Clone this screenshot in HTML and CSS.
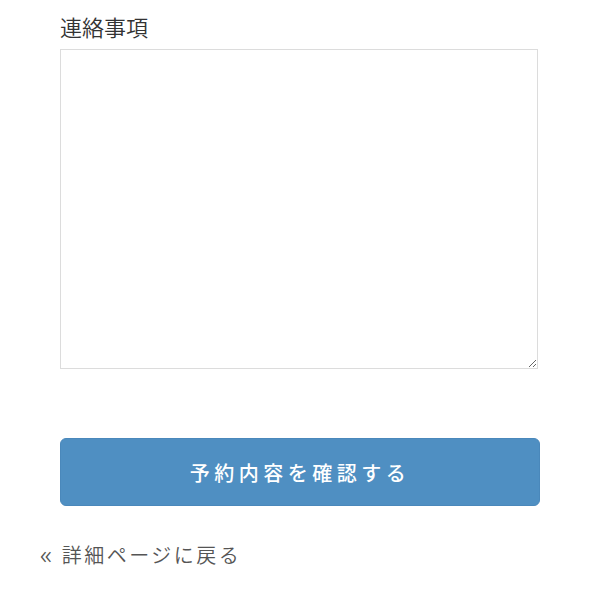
FILE: index.html
```html
<!DOCTYPE html>
<html lang="ja">
<head>
<meta charset="utf-8">
<link rel="stylesheet" href="styles.css">
</head>
<body>
<div class="page">
  <div class="form">
    <label class="label" for="note">連絡事項</label>
    <textarea id="note" class="note"></textarea>
    <button class="submit" type="button">予約内容を確認する</button>
  </div>
  <a class="back" href="#"><span class="arrow">«</span>詳細ページに戻る</a>
</div>
</body>
</html>
```
FILE: styles.css
```css
html, body {
  margin: 0;
  padding: 0;
  background: #fff;
}
body {
  font-family: "Noto Sans CJK JP", "Noto Sans", sans-serif;
  color: #333;
}
.page {
  padding: 11px 0 0 40px;
  width: 500px;
}
.form {
  display: flex;
  flex-direction: column;
  padding-left: 20px;
}
.label {
  font-size: 22px;
  line-height: 30px;
  letter-spacing: 0;
  color: #333;
  font-weight: 350;
}
.note {
  box-sizing: border-box;
  width: 478px;
  height: 320px;
  margin-top: 8px;
  border: 1px solid #dcdcdc;
  border-radius: 0;
  padding: 6px;
  font: inherit;
  resize: vertical;
}
.submit {
  box-sizing: border-box;
  width: 480px;
  height: 68px;
  margin-top: 69px;
  background: #4f8fc2;
  border: 1px solid #4a88bb;
  border-radius: 6px;
  color: #fff;
  font-family: "Noto Sans CJK JP", sans-serif;
  font-size: 20px;
  font-weight: 500;
  letter-spacing: 4.5px;
  padding: 0;
}
.back {
  display: block;
  margin-top: 33px;
  font-size: 20px;
  line-height: 28px;
  color: #555;
  text-decoration: none;
  letter-spacing: 2.5px;
  font-weight: 350;
}
.arrow {
  font-family: "Noto Sans", sans-serif;
  font-size: 26px;
  letter-spacing: 0;
  margin-right: 10px;
  position: relative;
  top: 1px;
}
```
